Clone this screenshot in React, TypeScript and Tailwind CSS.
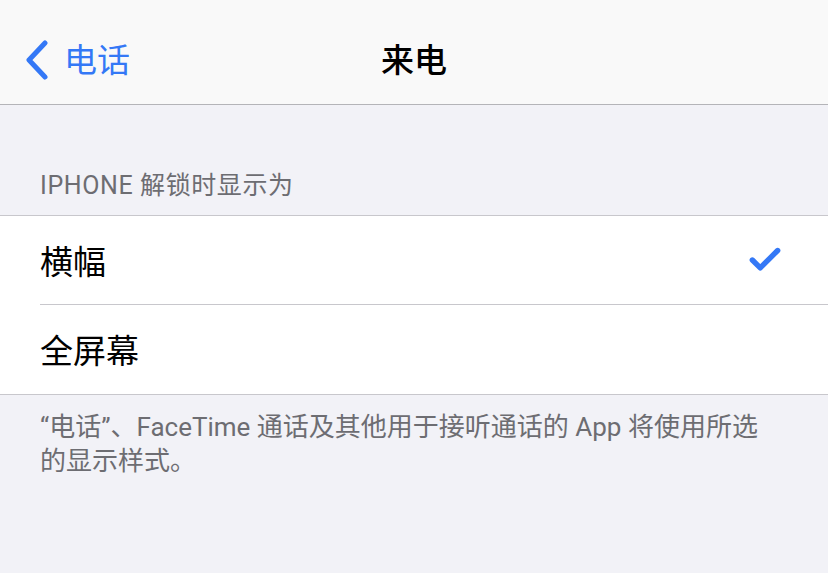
import { Check } from 'lucide-react'

const font = { fontFamily: 'Roboto, "Noto Sans CJK SC", sans-serif' }

const options = [
  { label: '横幅', selected: true },
  { label: '全屏幕', selected: false },
]

export default function App() {
  return (
    <div className="w-[828px] h-[573px] bg-[#f2f2f7] overflow-hidden" style={font}>
      {/* Nav bar */}
      <header className="relative h-[105px] bg-[#f9f9f9] border-b border-[#b4b4b8] pt-4 flex items-center">
        <div className="flex items-center pl-[24px] text-[#3478f6]">
          <svg width="26" height="40" viewBox="0 0 26 40" fill="none" className="mr-[14px]">
            <path d="M21 3 L5 20 L21 37" stroke="currentColor" strokeWidth="5" strokeLinecap="round" strokeLinejoin="round" />
          </svg>
          <span className="text-[33px] leading-none">电话</span>
        </div>
        <h1 className="absolute left-0 right-0 top-4 bottom-0 flex items-center justify-center text-[33px] font-medium text-black leading-none">
          来电
        </h1>
      </header>

      {/* Section header */}
      <div className="pl-10 pt-[65px] pb-[13px] text-[25px] leading-[32px] tracking-[0.6px] text-[#6d6d72]">IPHONE 解锁时显示为</div>

      {/* Options */}
      <div className="bg-white border-y border-[#c8c7cc]">
        {options.map((opt, i) => (
          <div key={opt.label} className="pl-10">
            <div
              className={`h-[89px] flex items-center justify-between pr-[44px] ${
                i < options.length - 1 ? 'border-b border-[#c8c7cc]' : ''
              }`}
            >
              <span className="text-[33px] text-black leading-none pt-[4px]">{opt.label}</span>
              {opt.selected && <Check size={38} strokeWidth={3.4} className="text-[#3478f6]" />}
            </div>
          </div>
        ))}
      </div>

      {/* Footer */}
      <p className="pl-10 pr-[50px] pt-[15px] text-[26px] leading-[34px] text-[#6d6d72]">
        “电话”、FaceTime 通话及其他用于接听通话的 App 将使用所选的显示样式。
      </p>
    </div>
  )
}
